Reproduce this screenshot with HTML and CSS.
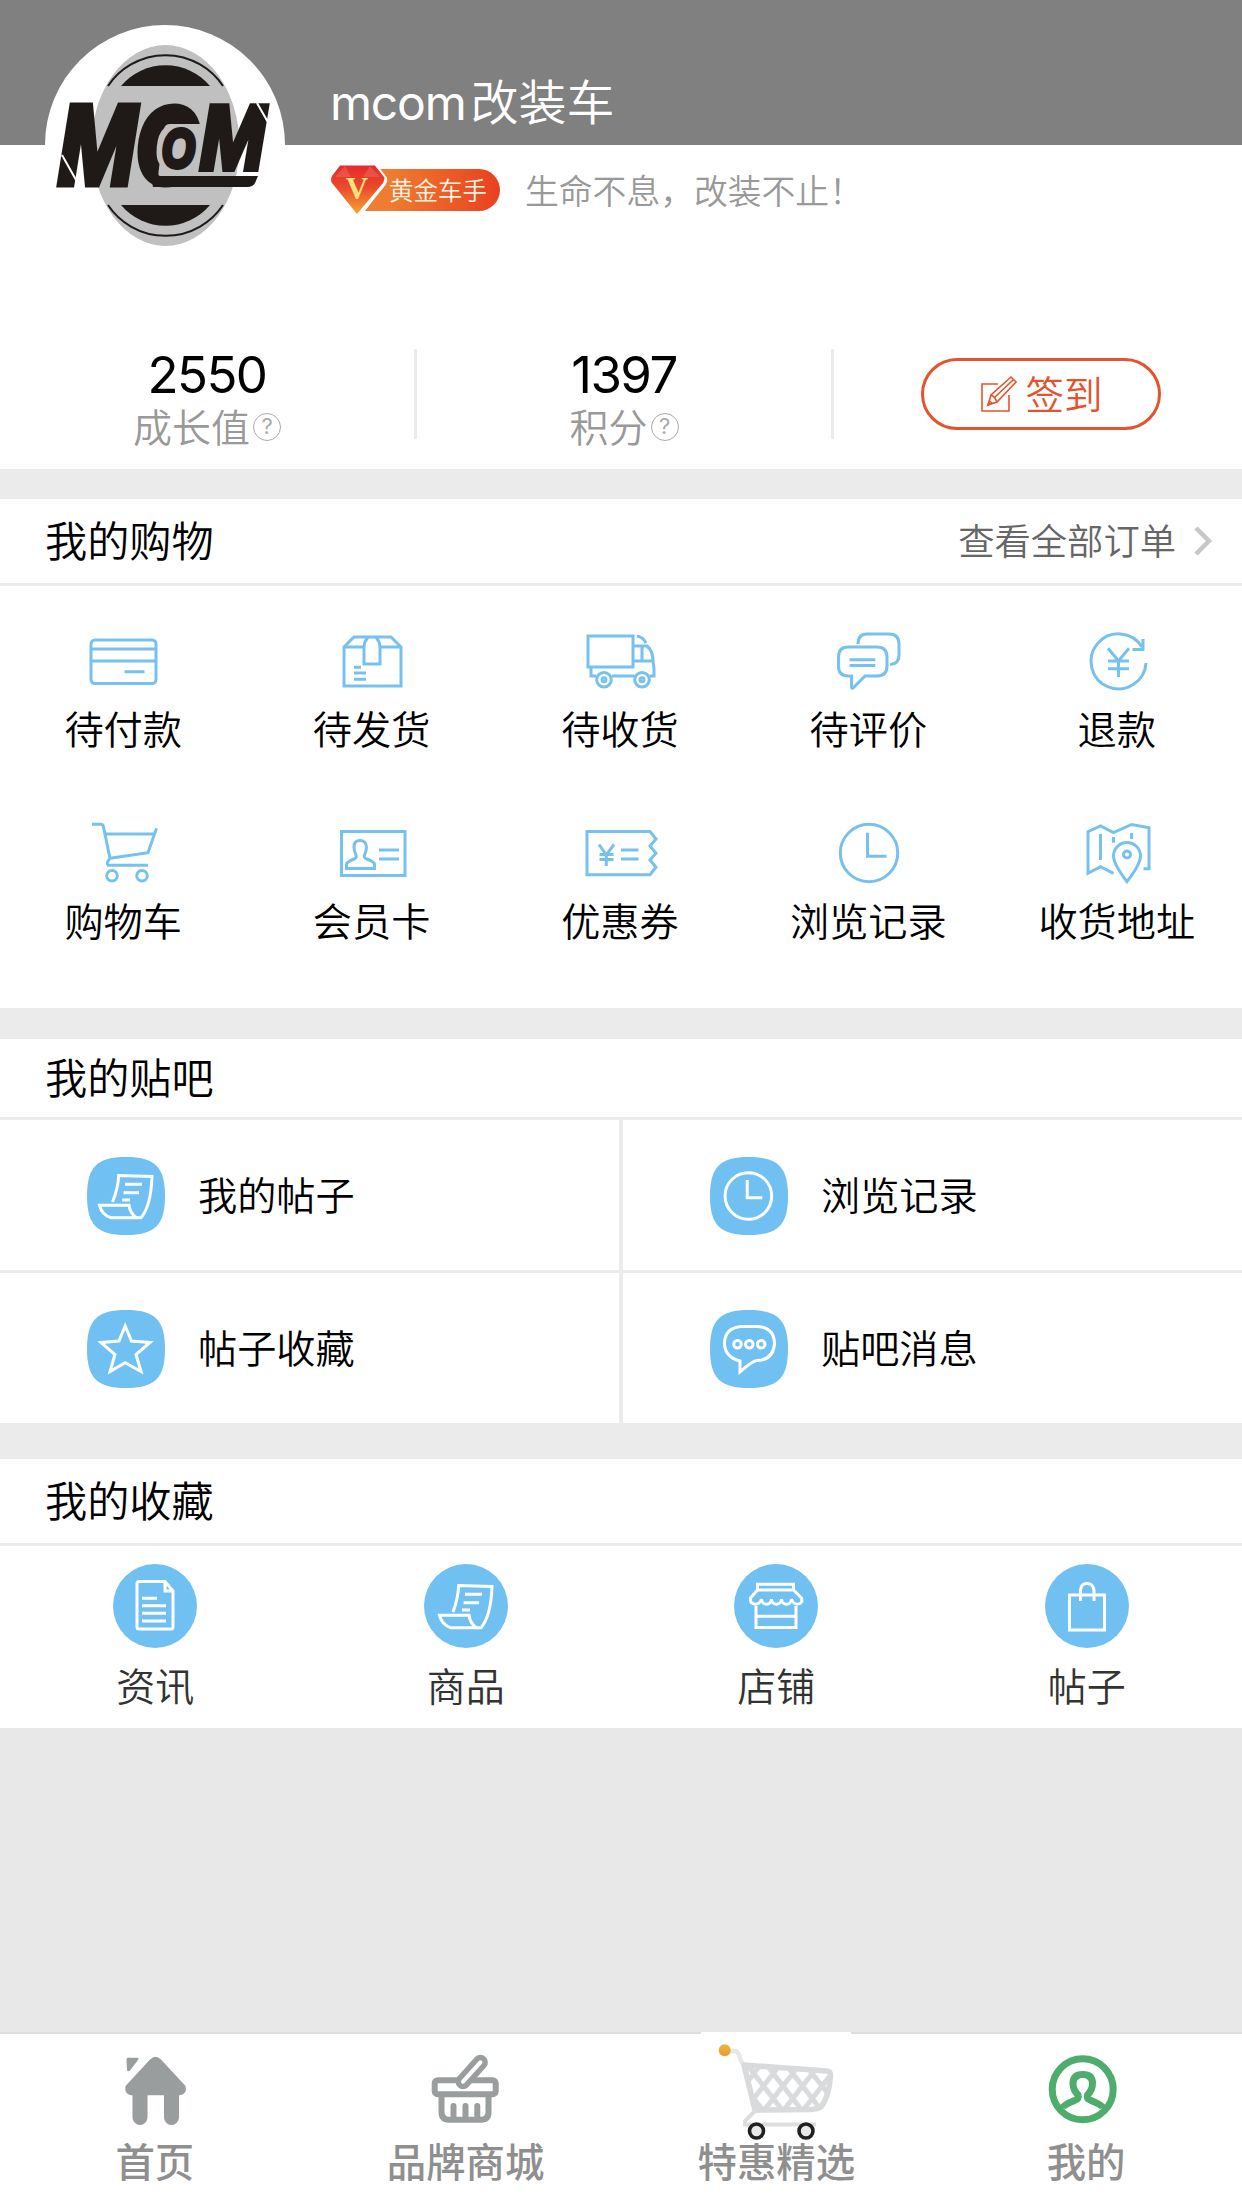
FILE: index.html
```html
<!DOCTYPE html>
<html lang="zh-CN">
  <head>
    <meta charset="UTF-8" />
    <meta name="viewport" content="width=device-width, initial-scale=1.0" />
    <link rel="stylesheet" href="styles.css">
    <title>我的</title>
  </head>
  <body>
    <!-- 个人信息 -->
    <header class="profile">
      <svg class="avatar" viewBox="0 0 240 240">
        <circle cx="120" cy="120" r="120" fill="#fff" />
        <ellipse cx="120.5" cy="120.5" rx="74" ry="100.5" fill="#c0c0c0" />
        <g fill="#1f1a17">
          <path d="M76 61A58 58 0 0 1 165 61Z" />
          <path d="M76 180A58 58 0 0 0 165 180Z" />
        </g>
        <g fill="none" stroke="#1f1a17" stroke-width="2">
          <path d="M63 61A69 69 0 0 1 178 61" />
          <path d="M63 180A69 69 0 0 0 178 180" />
        </g>
        <g class="logo-text">
          <text class="logo-m" transform="translate(13 159) scale(.83 1)" font-size="113">M</text>
          <text class="logo-c" transform="translate(92 157) scale(.78 1)" font-size="105">C</text>
        </g>
        <path d="M125 99H158L150 151H115Q113 151 113.500 147L119 104Q120 99 125 99Z" fill="#c0c0c0" />
        <g class="logo-text">
          <text class="logo-o" transform="translate(117 142) scale(.78 1)" font-size="54">O</text>
          <text transform="translate(155 144) scale(.87 1)" font-size="90">M</text>
        </g>
        <path d="M106 151H213L210 158Q208 162 202 162H108Z" fill="#1f1a17" />
        <path d="M17 130L35 162M212 78L224 99M195 148H214" stroke="#fff" stroke-width="2" />
      </svg>
      <div class="profile-info">
        <h1 class="name"><span class="latin">mcom</span>改装车</h1>
        <div class="profile-line">
          <div class="badge">
            <svg class="gem" viewBox="0 0 60 52">
              <defs>
                <linearGradient id="gem" x1="0" y1="0" x2="0" y2="1">
                  <stop offset="0" stop-color="#e52a2b" />
                  <stop offset=".45" stop-color="#ea4a2c" />
                  <stop offset="1" stop-color="#f6a52e" />
                </linearGradient>
              </defs>
              <path d="M46 5L55 15Q57 17 55 20L35 47H60V5Z" fill="#ee7d31" />
              <path d="M10 1.500H45L54 13Q55 16 53 19L27 50L2 19Q0 16 2 12Z" fill="url(#gem)" />
              <path d="M46 1L56 14Q57 17 55 20L30 51" fill="none" stroke="#fff" stroke-width="2" />
              <path d="M15 2L5 13L21 13ZM40 2L33 13H50Z" fill="#f06a62" opacity=".5" />
              <text x="27" y="35" text-anchor="middle" class="gem-v">V</text>
            </svg>
            <span class="badge-text">黄金车手</span>
          </div>
          <p class="slogan">生命不息，改装不止！</p>
        </div>
      </div>
    </header>

    <!-- 成长值 / 积分 / 签到 -->
    <section class="stats">
      <div class="stat">
        <strong class="stat-num">2550</strong>
        <span class="stat-label">成长值<i class="help">?</i></span>
      </div>
      <div class="stat">
        <strong class="stat-num">1397</strong>
        <span class="stat-label">积分<i class="help">?</i></span>
      </div>
      <div class="stat stat-sign">
        <button class="sign-btn">
          <svg class="sign-icon" viewBox="0 0 38 38">
            <path d="M18 9H2V36H29V20" />
            <path d="M8 30L11 20L31 2L36 7L17 27ZM11 20Q15 22 17 27M14 23L33 5" />
            <path d="M8 30L9.500 26L12 28Z" />
          </svg>签到
        </button>
      </div>
    </section>

    <!-- 我的购物 -->
    <section class="card shopping">
      <div class="card-head">
        <h2>我的购物</h2>
        <a class="more">查看全部订单
          <svg class="arrow" viewBox="0 0 20 30"><path d="M3 2L16 15L3 28" /></svg>
        </a>
      </div>
      <ul class="order-grid">
        <li>
          <svg viewBox="0 0 72 72">
            <rect x="3" y="15" width="65" height="43.500" rx="4" />
            <path d="M3 24H68M3 36H68M36.500 46.700H56.500" />
          </svg>待付款
        </li>
        <li>
          <svg viewBox="0 0 72 72">
            <path d="M7 22L17 12H54L64 22V61H7ZM7 22H27M43 22H64" />
            <path d="M31 12Q27 17 27 22V39H43V22Q43 17 39 12M17 42.300H24M17 48H29M17 54.300H29" />
          </svg>待发货
        </li>
        <li>
          <svg viewBox="0 0 72 72">
            <path d="M3 11H48V42H3ZM6 42V51H11.500M27 51H49.500M64.500 51H69V43L68 36Q68 26 62 21H48M48 36H68M57 21V36M52 11Q58 12 61 18" />
            <circle cx="19" cy="54.700" r="7.300" />
            <circle cx="57" cy="54.700" r="7.300" />
            <circle cx="19" cy="54.700" r="2" />
            <circle cx="57" cy="54.700" r="2" />
          </svg>待收货
        </li>
        <li>
          <svg viewBox="0 0 72 72">
            <path d="M15 22H44Q54 22 54 32V41Q54 51 44 51H32L20 63Q18.500 64 18.500 61V51H15Q5.500 51 5.500 41V32Q5.500 22 15 22Z" />
            <path d="M25 19Q25 9 34 9H56Q66 9 66 19V30Q66 39 57 39.500M16.600 34.700H42.300M16.600 40.500H42.300" />
          </svg>待评价
        </li>
        <li>
          <svg viewBox="0 0 72 72">
            <path d="M64 38A27.500 27.500 0 1 1 60 22M61 14V24.500H50.500" />
            <path d="M26 23.300L36.500 36L47 23.300M36.500 36V52M26 36H47M26 43.700H47" />
          </svg>退款
        </li>
        <li>
          <svg viewBox="0 0 72 72">
            <path d="M4 7.300H13Q15 7.300 15.500 10L22 41.300L60 35.700L68.500 11.300M17 17H66M22 41.300Q18 46 20 48.300H60" />
            <circle cx="24" cy="58.700" r="5.300" />
            <circle cx="54" cy="58.700" r="5.300" />
          </svg>购物车
        </li>
        <li>
          <svg viewBox="0 0 72 72">
            <path d="M4.500 14.500H68V58.500H4.500ZM42 33H62M42 42H62" />
            <path d="M9.500 51.500V47Q10 45 17 42Q20 41 19 38Q17 34 17 30Q17 23.500 23 23.500T29.500 30Q29.500 34 27.500 38Q26.500 41 30 42Q37 45 37.500 47V51.500Z" />
          </svg>会员卡
        </li>
        <li>
          <svg viewBox="0 0 72 72">
            <path d="M65 14.500H2V57.700H65L71 50.300L65 43L71 36.300L65 29L71 22Z" />
            <path d="M14 27.500L21.300 38L29 27.500M21.300 38V49M14.500 37.500H28.500M14.500 42.500H28.500M36 33H53.500M36 42H53.500" />
          </svg>优惠券
        </li>
        <li>
          <svg viewBox="0 0 72 72">
            <circle cx="36" cy="36" r="28.700" />
            <path d="M34.500 15.700V39.300H53.500" />
          </svg>浏览记录
        </li>
        <li>
          <svg viewBox="0 0 72 72">
            <path d="M31.500 56.300L18.500 49.700L6 56.300V14.700L18.500 9L31.500 15.700L49.600 7.500L67 10.700V51.700H61.500M18.500 17V43M31.500 20V25.700M49.600 16V22" />
            <path d="M45 64.700Q31.500 47 31.500 39A13.500 13.500 0 0 1 58.500 39Q58.500 47 45 64.700Z" />
            <circle cx="45" cy="37.500" r="3.500" />
          </svg>收货地址
        </li>
      </ul>
    </section>

    <!-- 我的贴吧 -->
    <section class="card forum">
      <div class="card-head">
        <h2>我的贴吧</h2>
      </div>
      <ul class="forum-grid">
        <li>
          <svg viewBox="0 0 78 78">
            <path class="tile" d="M39 0C68 0 78 10 78 39S68 78 39 78S0 68 0 39S10 0 39 0Z" />
            <path d="M25.500 45Q31 32 31.700 18.500L65 19.500Q64 49 54 60.700H24Q15 58 12.500 48.300H42Q43 56 49 60.500M38 27.300H55M36.600 35.700H52M35 43H43" />
          </svg><span>我的帖子</span>
        </li>
        <li>
          <svg viewBox="0 0 78 78">
            <path class="tile" d="M39 0C68 0 78 10 78 39S68 78 39 78S0 68 0 39S10 0 39 0Z" />
            <circle cx="38.400" cy="39" r="23.300" />
            <path d="M37.200 23V40.700H52.300" />
          </svg><span>浏览记录</span>
        </li>
        <li>
          <svg viewBox="0 0 78 78">
            <path class="tile" d="M39 0C68 0 78 10 78 39S68 78 39 78S0 68 0 39S10 0 39 0Z" />
            <path d="M38.200 16L44.500 31L63 32.500L49 44.500L54 61.500L38.200 52.700L23 61.500L28 44.500L14 32.500L32 31Z" />
          </svg><span>帖子收藏</span>
        </li>
        <li>
          <svg viewBox="0 0 78 78">
            <path class="tile" d="M39 0C68 0 78 10 78 39S68 78 39 78S0 68 0 39S10 0 39 0Z" />
            <path d="M31 16.500H48Q64.500 18 64.500 34Q63 50 47 50.500Q43 50.500 30 62V51Q14.500 47 14.500 33Q15 18 31 16.500Z" />
            <g>
              <circle cx="27.500" cy="34.300" r="3.800" />
              <circle cx="39.300" cy="34.300" r="3.800" />
              <circle cx="51.200" cy="34.300" r="3.800" />
            </g>
          </svg><span>贴吧消息</span>
        </li>
      </ul>
    </section>

    <!-- 我的收藏 -->
    <section class="card favorites">
      <div class="card-head">
        <h2>我的收藏</h2>
      </div>
      <ul class="fav-grid">
        <li>
          <svg viewBox="0 0 84 84">
            <circle class="tile" cx="42" cy="42" r="42" />
            <path d="M52 17.500H26Q24 17.500 24 19.500V63Q24 65 26 65H58Q60 65 60 63V27ZM52 17.500V27H60" />
            <path d="M29 34.300H44M29 41.700H53M29 49.300H53M29 57H53" />
          </svg>资讯
        </li>
        <li>
          <svg viewBox="0 0 84 84">
            <circle class="tile" cx="42" cy="42" r="42" />
            <path d="M29 48Q34 35 34.700 21.500L68 22.500Q67 52 57 63.700H27Q18 61 15.500 51.300H45Q46 59 52 63.500M41 30.300H58M39.600 38.700H55M38 46H46" />
          </svg>商品
        </li>
        <li>
          <svg viewBox="0 0 84 84">
            <circle class="tile" cx="42" cy="42" r="42" />
            <path d="M23.500 20.300H59.500V26H23.500ZM23.500 26L16.500 34C15 42 26 42 27.500 35C28 42 37 42 37.500 35C38 42 47 42 47.500 35C48 42 57 42 57.500 35C59 42 70 42 67.500 34L59.500 26M22 42V63.500H62V42M22 52.300H62" />
          </svg>店铺
        </li>
        <li>
          <svg viewBox="0 0 84 84">
            <circle class="tile" cx="42" cy="42" r="42" />
            <path d="M24.500 31H59.500V66H24.500ZM35.500 37V26Q36 19.500 42 19.500T49 26V37" />
          </svg>帖子
        </li>
      </ul>
    </section>

    <!-- 底部导航 -->
    <nav class="tabbar">
      <a class="tab">
        <svg class="tab-icon" viewBox="0 0 72 74">
          <path d="M9 5.700H18Q20.500 6 19 8L11 18.500Q8 20.500 8 17.500L7.500 7.500Q7.500 5.700 9 5.700Z" fill="#999d9d" />
          <path d="M31 7.500Q36.500 2 42 7.500L66.500 34Q68.500 42 61 43.300H60V65.500A7.300 7.300 0 0 1 45 65.500V43.300H28.500V65.500A7.300 7.300 0 0 1 13.500 65.500V43.300H12Q5 42 6.500 34Z" fill="#999d9d" />
        </svg>
        <span>首页</span>
      </a>
      <a class="tab">
        <svg class="tab-icon" viewBox="0 0 72 74" fill="none" stroke="#999d9d" stroke-width="6" stroke-linecap="round">
          <rect x="4.700" y="28.300" width="61" height="14" rx="3" />
          <path d="M11.500 45V60Q11.500 67.700 19 67.700H51Q58.500 67.700 58.500 60V45" />
          <path d="M23.500 54V66M35.500 54V66M47.300 54V66" />
          <path d="M33 29.700L50.400 10.300" stroke-width="15" />
          <path d="M33 29.700L50.400 10.300" stroke="#fff" stroke-width="4" />
        </svg>
        <span>品牌商城</span>
      </a>
      <a class="tab tab-special">
        <svg class="tab-cart" viewBox="0 0 150 112">
          <defs>
            <linearGradient id="ball" x1="0" y1="0" x2="0" y2="1">
              <stop offset="0" stop-color="#e9b83f" />
              <stop offset="1" stop-color="#f09a2b" />
            </linearGradient>
            <pattern id="mesh" width="19.500" height="25" patternUnits="userSpaceOnUse" patternTransform="translate(43 29)">
              <path d="M-2 -2.560L21.500 27.560M21.500 -2.560L-2 27.560" stroke="#d9dadc" stroke-width="5" />
            </pattern>
          </defs>
          <rect width="150" height="112" fill="#fff" />
          <path d="M25 19H34Q38 20 39 26L41.500 32" fill="none" stroke="#e6e7e8" stroke-width="4.500" />
          <path d="M43 33L126 39Q130 40 129.500 44Q128 65 120 75Q117 77 110 77.500L54 78Z" fill="url(#mesh)" stroke="#d9dadc" stroke-width="5.500" stroke-linejoin="round" />
          <path d="M54 79L44 89V92.500H115" fill="none" stroke="#dcdddf" stroke-width="4" />
          <circle cx="23.700" cy="18.300" r="6" fill="url(#ball)" />
          <g fill="#e8e8e8" stroke="#202023" stroke-width="3.600">
            <circle cx="55.500" cy="99" r="7" />
            <circle cx="105" cy="99" r="7" />
          </g>
        </svg>
        <span>特惠精选</span>
      </a>
      <a class="tab">
        <svg class="tab-icon" viewBox="0 0 72 74" fill="none" stroke="#4eac6d" stroke-width="7">
          <circle cx="32.700" cy="37.300" r="30.500" />
          <path d="M12.500 56Q13.500 53 24.500 48.500Q29.500 47 28 43Q23 38 23 31.500Q23 22.500 32.700 22.500T42.500 31.500Q42.500 38 37.500 43Q36 47 41 48.500Q52 53 53 56" />
        </svg>
        <span>我的</span>
      </a>
    </nav>
  </body>
</html>
```
FILE: styles.css
```css
/* 基本设置 */
* {
  margin: 0;
  padding: 0;
  box-sizing: border-box;
}

body {
  font-family: "Noto Sans CJK SC", sans-serif;
  font-weight: 350;
  background-color: #e8e8e8;
  color: #000;
  display: flex;
  flex-direction: column;
  height: 2208px;
}

ul {
  list-style: none;
}

svg {
  display: block;
  flex: none;
  overflow: visible;
}

h1,
h2 {
  font-weight: inherit;
}

/* 个人信息 */
.profile {
  height: 349px;
  padding: 25px 0 0 45px;
  display: flex;
  gap: 45px;
  background: linear-gradient(#808080 145px, #fff 145px);
}

.avatar {
  width: 240px;
  height: 240px;
}

.logo-text {
  font-family: "Liberation Sans", sans-serif;
  font-weight: bold;
  font-style: italic;
  fill: #1f1a17;
  stroke: #1f1a17;
  stroke-width: 6px;
}

.logo-m {
  stroke-width: 7px;
}

.logo-c {
  stroke-width: 9px;
}

.logo-o {
  stroke-width: 5px;
}

.name {
  height: 120px;
  padding-top: 38px;
  font-size: 48px;
  line-height: 72px;
  color: #fff;
  white-space: nowrap;
}

.latin {
  font-family: Inter, sans-serif;
  font-weight: 400;
  margin-right: 5px;
  letter-spacing: -1.2px;
}

.profile-line {
  display: flex;
  align-items: center;
  height: 52px;
  margin-top: 19px;
  gap: 25px;
}

.badge {
  display: flex;
  align-items: center;
  width: 170px;
  height: 42px;
  border-radius: 0 21px 21px 0;
  background: linear-gradient(90deg, transparent 59px, #ee7d31 59px, #e9401f);
}

.gem {
  width: 60px;
  height: 52px;
  margin-right: -1px;
}

.gem-v {
  font-family: "Liberation Serif", serif;
  font-weight: bold;
  font-size: 31px;
  fill: #fde37c;
}

.badge-text {
  font-size: 24.5px;
  line-height: 40px;
  color: #fff3e2;
  white-space: nowrap;
}

.slogan {
  font-size: 33.8px;
  line-height: 48px;
  color: #999;
  white-space: nowrap;
}

/* 数据统计 */
.stats {
  display: flex;
  height: 120px;
  background-color: #fff;
}

.stat {
  width: 417px;
  height: 90px;
  display: flex;
  flex-direction: column;
  align-items: center;
  border-right: 3px solid #ebebeb;
}

.stat-sign {
  width: 408px;
  border-right: none;
}

.stat-num {
  font-family: Inter, sans-serif;
  font-weight: 400;
  font-size: 51px;
  letter-spacing: -1.6px;
  line-height: 52px;
}

.stat-label {
  display: flex;
  align-items: center;
  gap: 3px;
  font-size: 39px;
  line-height: 49px;
  color: #999;
}

.help {
  width: 28px;
  height: 28px;
  margin-top: 2px;
  border: 1.5px solid #aaa;
  border-radius: 50%;
  font: normal 22px/25px Inter, sans-serif;
  color: #aaa;
  text-align: center;
}

.sign-btn {
  display: flex;
  align-items: center;
  justify-content: center;
  gap: 7px;
  width: 240px;
  height: 72px;
  margin: 9px 0 0 6px;
  padding: 0 0 4px 1px;
  border: 3px solid #e4532d;
  border-radius: 36px;
  background: none;
  font: inherit;
  font-size: 38.5px;
  color: #e4532d;
}

.sign-icon {
  width: 38px;
  height: 38px;
  margin-top: 3px;
  fill: none;
  stroke: #e4532d;
  stroke-width: 1.6;
}

/* 卡片 */
.card {
  background-color: #fff;
  border-top: 30px solid #ebebeb;
}

.card-head {
  display: flex;
  align-items: center;
  justify-content: space-between;
  height: 87px;
  padding: 0 29px 4px 45px;
  border-bottom: 3px solid #ebebeb;
}

.card-head h2 {
  font-size: 42.2px;
  line-height: 60px;
}

.more {
  display: flex;
  align-items: center;
  gap: 17px;
  font-size: 36.3px;
  color: #666;
}

.arrow {
  width: 20px;
  height: 30px;
  margin-top: 4px;
  fill: none;
  stroke: #c7c7c7;
  stroke-width: 4.5;
}

/* 我的购物 */
.order-grid {
  display: grid;
  grid-template-columns: repeat(5, 248.4px);
  grid-auto-rows: 192px;
  height: 422px;
  margin-left: -1px;
  padding-top: 39px;
}

.order-grid li {
  display: flex;
  flex-direction: column;
  align-items: center;
  font-size: 39.2px;
  line-height: 60px;
}

.order-grid svg {
  width: 72px;
  height: 72px;
  margin-left: 2px;
  fill: none;
  stroke: #76c1ee;
  stroke-width: 3;
}

/* 我的贴吧 */
.forum {
  border-top-width: 31px;
}

.forum .card-head {
  height: 81px;
}

.forum-grid {
  display: grid;
  grid-template-columns: 619px 619px;
  grid-auto-rows: 150px;
  gap: 3px 4px;
  background-color: #ebebeb;
}

.forum-grid li {
  display: flex;
  align-items: center;
  gap: 33px;
  padding-left: 87px;
  background-color: #fff;
  font-size: 39.2px;
}

.forum-grid span {
  padding-bottom: 4px;
}

.forum-grid svg {
  width: 78px;
  height: 78px;
  margin-top: 1px;
  fill: none;
  stroke: #fff;
  stroke-width: 3;
}

.tile {
  fill: #70c1f2;
  stroke: none;
}

/* 我的收藏 */
.favorites {
  border-top-width: 36px;
}

.fav-grid {
  display: grid;
  grid-template-columns: repeat(4, 1fr);
  height: 182px;
  padding-top: 18px;
}

.fav-grid li {
  display: flex;
  flex-direction: column;
  align-items: center;
  gap: 6px;
  font-size: 39px;
  line-height: 60px;
  color: #333;
}

.fav-grid svg {
  width: 84px;
  height: 84px;
  fill: none;
  stroke: #fff;
  stroke-width: 3;
}

/* 底部导航 */
.tabbar {
  display: flex;
  height: 176px;
  margin-top: auto;
  border-top: 2px solid #dfdfdf;
  background-color: #fff;
}

.tab {
  flex: 1;
  display: flex;
  flex-direction: column;
  align-items: center;
  padding: 18px 1px 0 0;
  font-size: 39.4px;
  font-weight: 500;
  line-height: 59px;
  color: #8f8f8f;
}

.tab-icon {
  width: 72px;
  height: 74px;
  margin-bottom: 4px;
}

.tab-special {
  padding: 0;
}

.tab-cart {
  width: 150px;
  height: 112px;
  margin: -2px 0 -14px;
}

.tab-special span {
  position: relative;
}
```
